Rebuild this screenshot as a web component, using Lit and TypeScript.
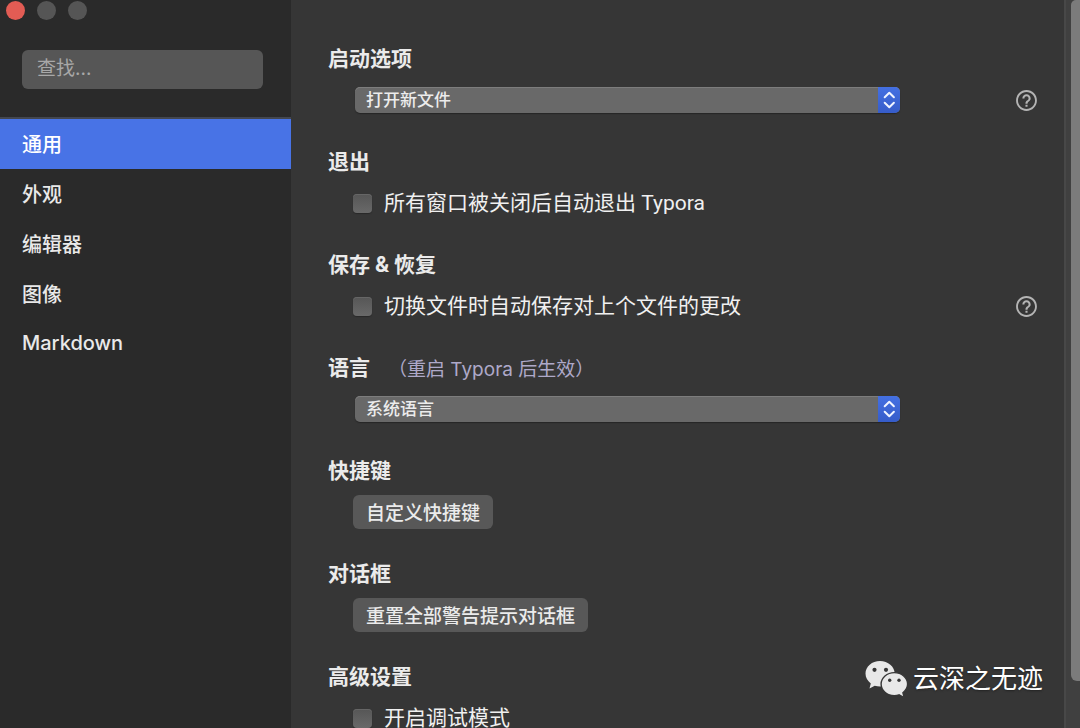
import { LitElement, html, css, svg } from "lit";
import { customElement, property, state } from "lit/decorators.js";

const sharedText = css`
  button,
  input,
  select {
    margin: 0;
    font-family: inherit;
    color: inherit;
  }
`;

@customElement("settings-sidebar")
class SettingsSidebar extends LitElement {
  @property({ attribute: false }) items: string[] = [];
  @state() private active = 0;

  static styles = [
    sharedText,
    css`
      :host {
        display: flex;
        flex-direction: column;
        background: #2a2a2a;
      }
      .lights {
        display: flex;
        gap: 12px;
        padding: 1px 6px 0;
      }
      .light {
        width: 19px;
        height: 19px;
        padding: 0;
        border: 0;
        border-radius: 50%;
        background: #555555;
      }
      .close {
        background: #e25c54;
      }
      .search {
        display: flex;
        padding: 30px 28px 28px 22px;
      }
      .search-box {
        flex: 1;
        min-width: 0;
        height: 39px;
        box-sizing: border-box;
        padding: 0 15px 2px;
        border: 0;
        border-radius: 6px;
        background: #565656;
        font-size: 19px;
        outline: none;
      }
      .search-box::placeholder {
        color: #a8a8a8;
        opacity: 1;
      }
      .nav {
        display: flex;
        flex-direction: column;
        border-top: 2px solid #434750;
      }
      .item {
        height: 50px;
        padding: 0 22px 2px;
        border: 0;
        background: none;
        text-align: left;
        font-size: 20px;
        font-weight: 500;
        color: #e9e9e9;
      }
      .active {
        background: #4873e6;
        color: #ffffff;
      }
    `,
  ];

  render() {
    return html`
      <div class="lights">
        <button class="light close" aria-label="关闭"></button>
        <button class="light" aria-label="最小化"></button>
        <button class="light" aria-label="缩放"></button>
      </div>
      <div class="search">
        <input class="search-box" type="text" placeholder="查找..." aria-label="查找" />
      </div>
      <nav class="nav">
        ${this.items.map(
          (label, i) => html`<button
            class="item ${i === this.active ? "active" : ""}"
            @click=${() => (this.active = i)}
          >${label}</button>`
        )}
      </nav>
    `;
  }
}

type Control =
  | { kind: "select"; options: string[] }
  | { kind: "check"; label: string }
  | { kind: "button"; label: string };

interface Section {
  title: string;
  hint?: string;
  help?: boolean;
  control: Control;
}

const sections: Section[] = [
  { title: "启动选项", help: true, control: { kind: "select", options: ["打开新文件"] } },
  { title: "退出", control: { kind: "check", label: "所有窗口被关闭后自动退出 Typora" } },
  { title: "保存 & 恢复", help: true, control: { kind: "check", label: "切换文件时自动保存对上个文件的更改" } },
  { title: "语言", hint: "（重启 Typora 后生效）", control: { kind: "select", options: ["系统语言"] } },
  { title: "快捷键", control: { kind: "button", label: "自定义快捷键" } },
  { title: "对话框", control: { kind: "button", label: "重置全部警告提示对话框" } },
  { title: "高级设置", control: { kind: "check", label: "开启调试模式" } },
];

const helpShape = svg`<path fill="currentColor" d="M11 18h2v-2h-2v2zm1-16C6.48 2 2 6.48 2 12s4.48 10 10 10 10-4.48 10-10S17.52 2 12 2zm0 18.2c-4.52 0-8.2-3.68-8.2-8.2s3.68-8.2 8.2-8.2 8.2 3.68 8.2 8.2-3.68 8.2-8.2 8.2zm0-14.2c-2.21 0-4 1.79-4 4h2c0-1.1.9-2 2-2s2 .9 2 2c0 2-3 1.75-3 5h2c0-2.25 3-2.5 3-5 0-2.21-1.79-4-4-4z"/>`;

@customElement("settings-section")
class SettingsSection extends LitElement {
  @property({ attribute: false }) section!: Section;

  static styles = [
    sharedText,
    css`
      :host {
        display: flex;
        flex-direction: column;
        gap: 6px;
      }
      .head {
        display: flex;
        align-items: center;
        gap: 18px;
        height: 30px;
      }
      .title {
        margin: 0;
        font-size: 21px;
        line-height: 30px;
        font-weight: 700;
        color: #ebebeb;
      }
      .hint {
        padding-bottom: 2px;
        font-size: 19px;
        color: #aea9c9;
      }
      .row {
        display: flex;
        align-items: center;
        justify-content: space-between;
        height: 40px;
        padding-left: 25px;
      }
      .select-wrap {
        display: grid;
        flex: 0 0 80%;
        box-sizing: border-box;
        padding: 0 2px;
      }
      .select {
        grid-area: 1 / 1;
        height: 26px;
        padding: 0 34px 0 11px;
        appearance: none;
        border: 0;
        border-radius: 5px;
        background: #696969;
        box-shadow: inset 0 1px #7d7d7d, 0 1px 1px #262626;
        font-size: 17px;
        font-weight: 500;
        color: #ececec;
      }
      .stepper {
        grid-area: 1 / 1;
        justify-self: end;
        width: 22px;
        height: 26px;
        border-radius: 0 5px 5px 0;
        background: linear-gradient(#4470e2, #365cc9);
        pointer-events: none;
      }
      .check-label {
        display: flex;
        align-items: center;
        gap: 12px;
        font-family: Roboto, "Noto Sans CJK SC", sans-serif;
        font-size: 21px;
        line-height: 30px;
        color: #f0f0f0;
      }
      .check {
        width: 19px;
        height: 19px;
        margin: 0;
        appearance: none;
        border-radius: 4px;
        background: linear-gradient(#565656, #696969);
        box-shadow: inset 0 1px #666666, 0 1px 1px #292929;
      }
      .check:checked {
        background: #4873e6;
      }
      .push {
        height: 34px;
        padding: 0 13px 2px;
        border: 0;
        border-radius: 6px;
        background: #585858;
        font-size: 19px;
        font-weight: 500;
        color: #ebebeb;
      }
      .help {
        display: flex;
        padding: 0;
        border: 0;
        background: none;
        color: #b4b4b4;
      }
    `,
  ];

  private control(c: Control) {
    if (c.kind === "select") {
      return html`<div class="select-wrap">
        <select class="select" aria-label=${this.section.title}>
          ${c.options.map((o) => html`<option>${o}</option>`)}
        </select>
        <svg class="stepper" viewBox="0 0 22 26" aria-hidden="true">
          <path d="M6.7 10.3 11.3 5.8 15.9 10.3M6.7 15.7 11.3 20.2 15.9 15.7" fill="none" stroke="#f0f4ff" stroke-width="2" stroke-linecap="round" stroke-linejoin="round" />
        </svg>
      </div>`;
    }
    if (c.kind === "check") {
      return html`<label class="check-label"><input class="check" type="checkbox" /><span>${c.label}</span></label>`;
    }
    return html`<button class="push">${c.label}</button>`;
  }

  render() {
    const s = this.section;
    return html`
      <div class="head">
        <h2 class="title">${s.title}</h2>
        ${s.hint ? html`<span class="hint">${s.hint}</span>` : ""}
      </div>
      <div class="row">
        ${this.control(s.control)}
        ${s.help
          ? html`<button class="help" aria-label="帮助"><svg width="25" height="25" viewBox="0 0 24 24">${helpShape}</svg></button>`
          : ""}
      </div>
    `;
  }
}

@customElement("app-root")
class AppRoot extends LitElement {
  static styles = css`
    :host {
      display: grid;
      grid-template-columns: 291px minmax(0, 1fr) 16px;
      height: 100vh;
      overflow: hidden;
      position: relative;
      background: #363636;
      color: #ebebeb;
      font-family: Inter, "Noto Sans CJK SC", sans-serif;
    }
    .content {
      display: flex;
      flex-direction: column;
      gap: 27px;
      min-height: 0;
      overflow: hidden;
      padding: 44px 25px 0 37px;
    }
    .section {
      flex: none;
    }
    .track {
      display: grid;
      grid-template-rows: 29fr 2fr;
      justify-content: end;
      box-sizing: border-box;
      border-left: 2px solid #484848;
      background: #404040;
    }
    .thumb {
      width: 9px;
      border-radius: 5px 0 0 6px;
      background: #7b7b7b;
    }
    .watermark {
      position: absolute;
      right: 37px;
      bottom: 29px;
      display: flex;
      align-items: center;
      gap: 5px;
      font-size: 26px;
      line-height: 40px;
      color: #ffffff;
      text-shadow: 0 1px 2px #222222;
    }
  `;

  render() {
    return html`
      <settings-sidebar .items=${["通用", "外观", "编辑器", "图像", "Markdown"]}></settings-sidebar>
      <main class="content">
        ${sections.map((s) => html`<settings-section class="section" .section=${s}></settings-section>`)}
      </main>
      <div class="track"><div class="thumb"></div></div>
      <div class="watermark">
        <svg width="43" height="38" viewBox="0 0 43 38" aria-hidden="true">
          <path fill="#e8e8e8" d="M15 1C7 1 .5 6.500.5 13.600c0 4 2 7.400 5.300 9.800L4.500 28.500l5.200-2.800c1.700.5 3.500.8 5.300.8 8 0 14.700-5.700 14.700-12.800S23 1 15 1z" />
          <path fill="#e8e8e8" stroke="#363636" stroke-width="1.400" d="M29.300 12.600c-7.300 0-13.200 5.100-13.200 11.500s5.900 11.500 13.200 11.500c1.700 0 3.300-.3 4.700-.8l5.200 2.700-1.300-4.800c2.900-2.100 4.700-5.200 4.700-8.600 0-6.400-6-11.500-13.300-11.500z" />
          <circle cx="9.500" cy="9.800" r="2.100" fill="#363636" />
          <circle cx="21" cy="9.800" r="2.100" fill="#363636" />
          <circle cx="24.700" cy="20.300" r="1.700" fill="#363636" />
          <circle cx="34" cy="20.300" r="1.700" fill="#363636" />
        </svg>
        <span>云深之无迹</span>
      </div>
    `;
  }
}
